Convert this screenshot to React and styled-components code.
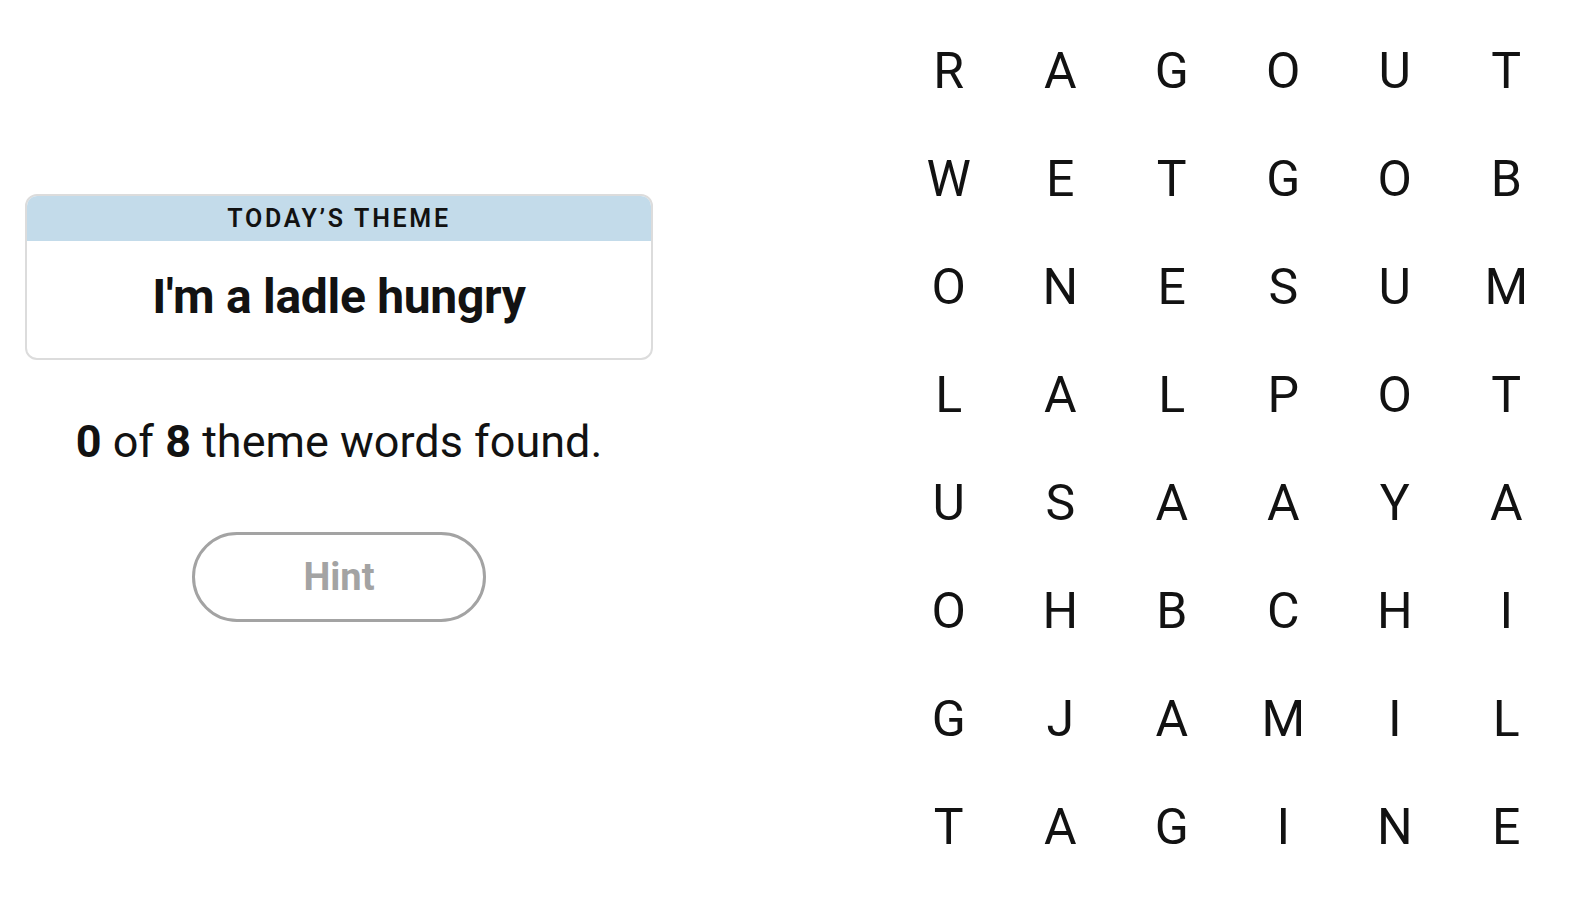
import React from "react";
import styled, { createGlobalStyle } from "styled-components";

const GlobalStyle = createGlobalStyle`
  body {
    margin: 0;
    background: #ffffff;
    color: #121212;
    font-family: "Roboto", "Liberation Sans", sans-serif;
  }
`;

const letters = [
  "RAGOUT",
  "WETGOB",
  "ONESUM",
  "LALPOT",
  "USAAYA",
  "OHBCHI",
  "GJAMIL",
  "TAGINE",
];

const App = () => {
  return (
    <>
      <GlobalStyle />
      <Page>
        <Side>
          <ThemeCard>
            <ThemeHeader>TODAY’S THEME</ThemeHeader>
            <ThemeTitle>I'm a ladle hungry</ThemeTitle>
          </ThemeCard>
          <Progress>
            <b>0</b> of <b>8</b> theme words found.
          </Progress>
          <HintButton type="button" disabled>
            Hint
          </HintButton>
        </Side>
        <Board>
          {letters.map((row, r) =>
            row.split("").map((ch, c) => <Cell key={r + "-" + c}>{ch}</Cell>)
          )}
        </Board>
      </Page>
    </>
  );
};

const Page = styled.div`
  display: flex;
  justify-content: space-between;
  align-items: flex-start;
  width: 1574px;
  height: 902px;
  box-sizing: border-box;
  padding: 17px 12px 0 25px;
`;

const Side = styled.div`
  width: 628px;
  display: flex;
  flex-direction: column;
  align-items: center;
  padding-top: 177px;
`;

const ThemeCard = styled.div`
  width: 100%;
  box-sizing: border-box;
  border: 2px solid #dcdcdc;
  border-radius: 12px;
  overflow: hidden;
  text-align: center;
`;

const ThemeHeader = styled.div`
  background: #c3dbea;
  height: 47px;
  line-height: 49px;
  font-size: 25px;
  font-weight: 600;
  letter-spacing: 2.7px;
  margin: -2px -2px 0;
`;

const ThemeTitle = styled.div`
  height: 117px;
  line-height: 112px;
  font-size: 48px;
  font-weight: 700;
  letter-spacing: -0.3px;
`;

const Progress = styled.p`
  margin: 56px 0 0;
  font-size: 45px;
  line-height: 52px;

  b {
    font-weight: 700;
  }
`;

const HintButton = styled.button`
  margin-top: 64px;
  width: 294px;
  height: 90px;
  border: 3px solid #a3a3a3;
  border-radius: 45px;
  background: #ffffff;
  color: #a3a3a3;
  font-family: "Roboto", sans-serif;
  font-size: 38px;
  font-weight: 700;
  cursor: default;
`;

const Board = styled.div`
  display: grid;
  grid-template-columns: repeat(6, 111.5px);
  grid-auto-rows: 108px;
`;

const Cell = styled.div`
  display: flex;
  align-items: center;
  justify-content: center;
  font-size: 50px;
  color: #121212;
`;

export default App;
